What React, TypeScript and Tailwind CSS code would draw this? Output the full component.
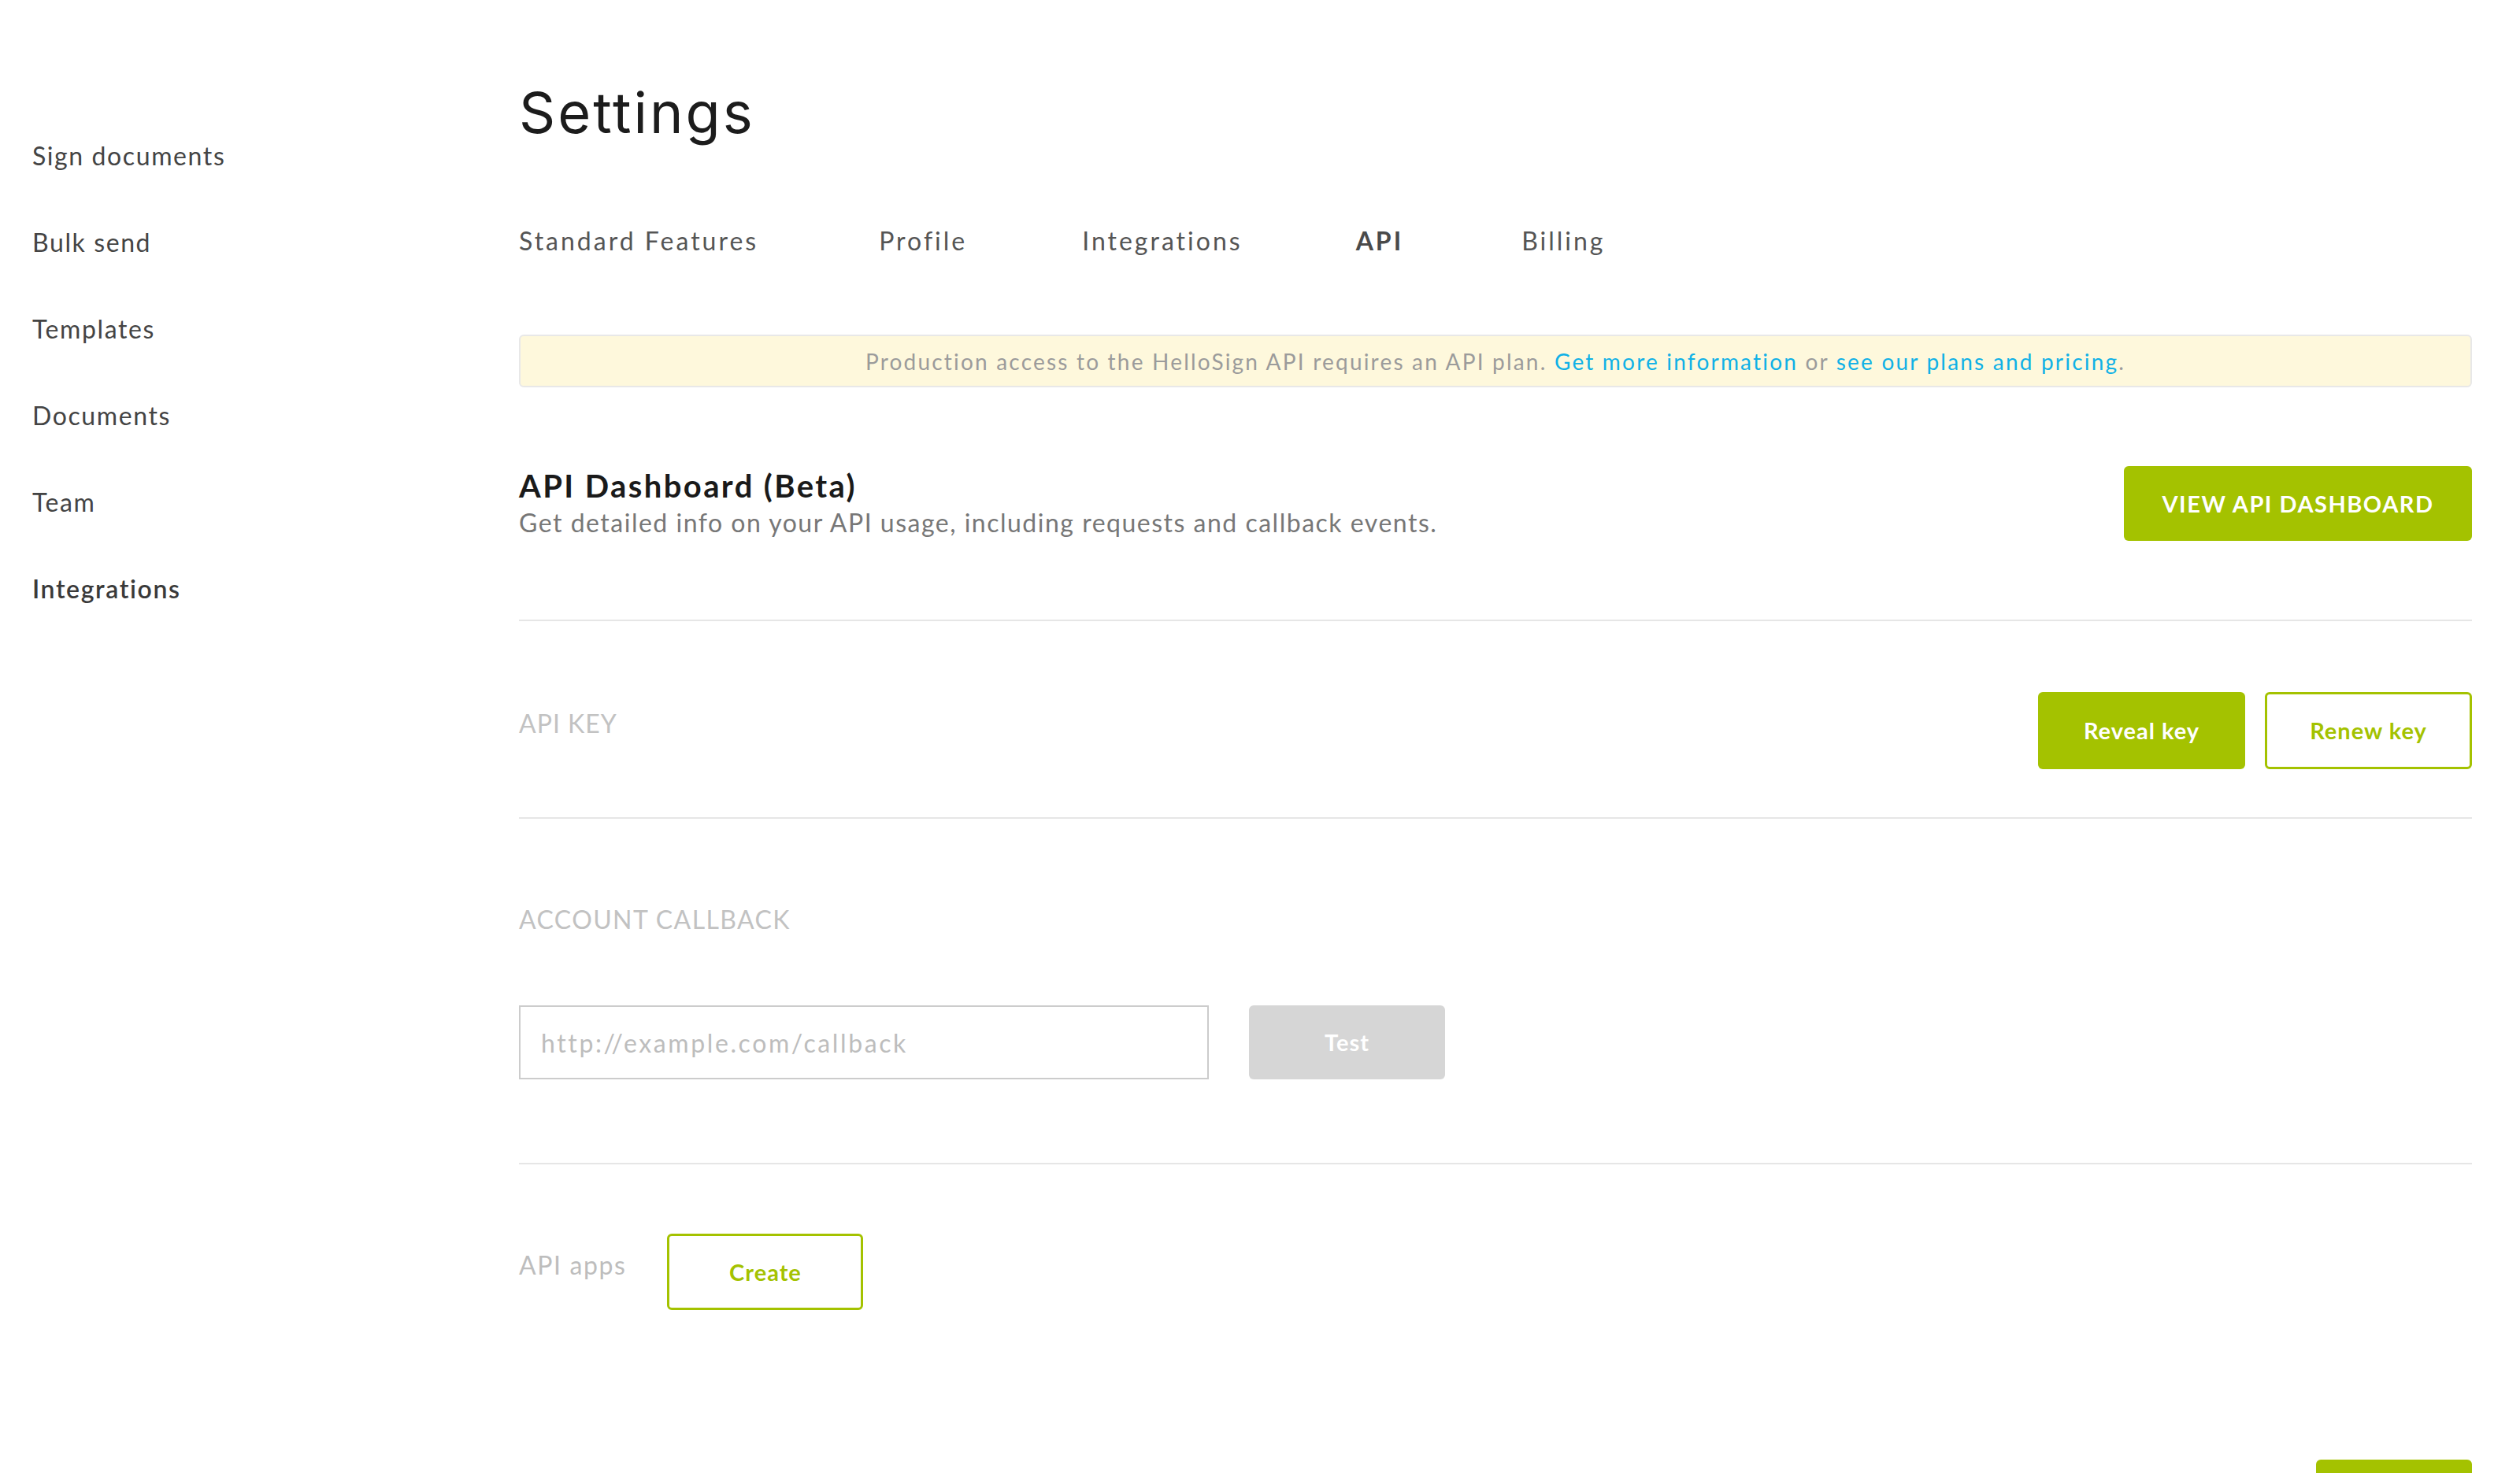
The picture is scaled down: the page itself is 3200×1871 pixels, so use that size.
import React from 'react';

const NAV = ['Sign documents', 'Bulk send', 'Templates', 'Documents', 'Team', 'Integrations'];

const Divider = ({ className = '' }: { className?: string }) => <div className={`h-[2px] bg-[#e6e6e6] ${className}`} />;

export default function App() {
  return (
    <div className="flex min-h-[1871px] bg-white font-['Lato','Liberation_Sans',sans-serif] overflow-hidden">
      {/* sidebar */}
      <aside className="w-[659px] shrink-0 pl-[41px] pt-[174px]">
        {NAV.map((n) => (
          <div
            key={n}
            className={`h-[110px] text-[32px] leading-[48px] tracking-[1.6px] ${n === 'Integrations' ? 'font-semibold text-[#3a3a3a]' : 'text-[#444]'}`}
          >
            {n}
          </div>
        ))}
      </aside>

      <main className="flex-1 pr-[61px] pt-[99px] flex flex-col">
        <h1 className="text-[72px] leading-[88px] text-[#1c1c1c] font-['Inter','Liberation_Sans',sans-serif] tracking-[3px]">Settings</h1>

        <nav className="mt-[95px] flex text-[32px] leading-[48px] tracking-[3px] text-[#555]">
          <span className="mr-[153px]">Standard Features</span>
          <span className="mr-[146px]">Profile</span>
          <span className="mr-[144px]">Integrations</span>
          <span className="mr-[150px] font-bold text-[#4a4a4a]">API</span>
          <span>Billing</span>
        </nav>

        <div className="mt-[95px] h-[67px] rounded-[6px] border-2 border-[#e8e8e8] bg-[#fef8dc] flex items-center justify-center text-[28px] tracking-[2.2px] text-[#9b9b9b]">
          <span>
            Production access to the HelloSign API requires an API plan.{' '}
            <a className="text-[#10b1e6]">Get more information</a> or{' '}
            <a className="text-[#10b1e6]">see our plans and pricing</a>.
          </span>
        </div>

        <div className="mt-[100px] flex items-center justify-between">
          <div>
            <div className="text-[40px] leading-[48px] font-bold tracking-[2.4px] text-[#1a1a1a]">API Dashboard (Beta)</div>
            <div className="text-[32px] leading-[46px] tracking-[1.5px] text-[#777]">Get detailed info on your API usage, including requests and callback events.</div>
          </div>
          <button className="w-[442px] h-[95px] rounded-[6px] bg-[#a4c200] text-white text-[29px] font-bold tracking-[1.5px]">
            VIEW API DASHBOARD
          </button>
        </div>

        <Divider className="mt-[100px]" />

        <div className="mt-[90px] flex items-start justify-between">
          <div className="mt-[16px] text-[32px] leading-[48px] tracking-[1px] text-[#c2c2c2]">API KEY</div>
          <div className="flex gap-[25px]">
            <button className="w-[263px] h-[98px] rounded-[6px] bg-[#a4c200] text-white text-[29px] font-bold tracking-[1px]">Reveal key</button>
            <button className="w-[263px] h-[98px] rounded-[6px] border-[3px] border-[#a4c200] text-[#a4c200] text-[29px] font-bold tracking-[1px]">Renew key</button>
          </div>
        </div>

        <Divider className="mt-[61px]" />

        <div className="mt-[104px] text-[32px] leading-[48px] tracking-[1.4px] text-[#c2c2c2]">ACCOUNT CALLBACK</div>

        <div className="mt-[85px] flex gap-[51px]">
          <input
            placeholder="http://example.com/callback"
            className="w-[876px] h-[94px] border-2 border-[#cccccc] px-[26px] text-[32px] tracking-[2.6px] placeholder:text-[#bdbdbd] outline-none"
          />
          <button className="w-[249px] h-[94px] rounded-[6px] bg-[#d6d6d6] text-white text-[29px] font-bold tracking-[1px]">Test</button>
        </div>

        <Divider className="mt-[106px]" />

        <div className="mt-[88px] flex items-start gap-[52px]">
          <div className="mt-[16px] text-[32px] leading-[48px] tracking-[1.6px] text-[#bdbdbd]">API apps</div>
          <button className="w-[249px] h-[97px] rounded-[6px] border-[3px] border-[#a4c200] text-[#a4c200] text-[29px] font-bold tracking-[1px]">Create</button>
        </div>

        <div className="mt-[190px] self-end w-[198px] h-[96px] rounded-[6px] bg-[#a4c200]" />
      </main>
    </div>
  );
}
